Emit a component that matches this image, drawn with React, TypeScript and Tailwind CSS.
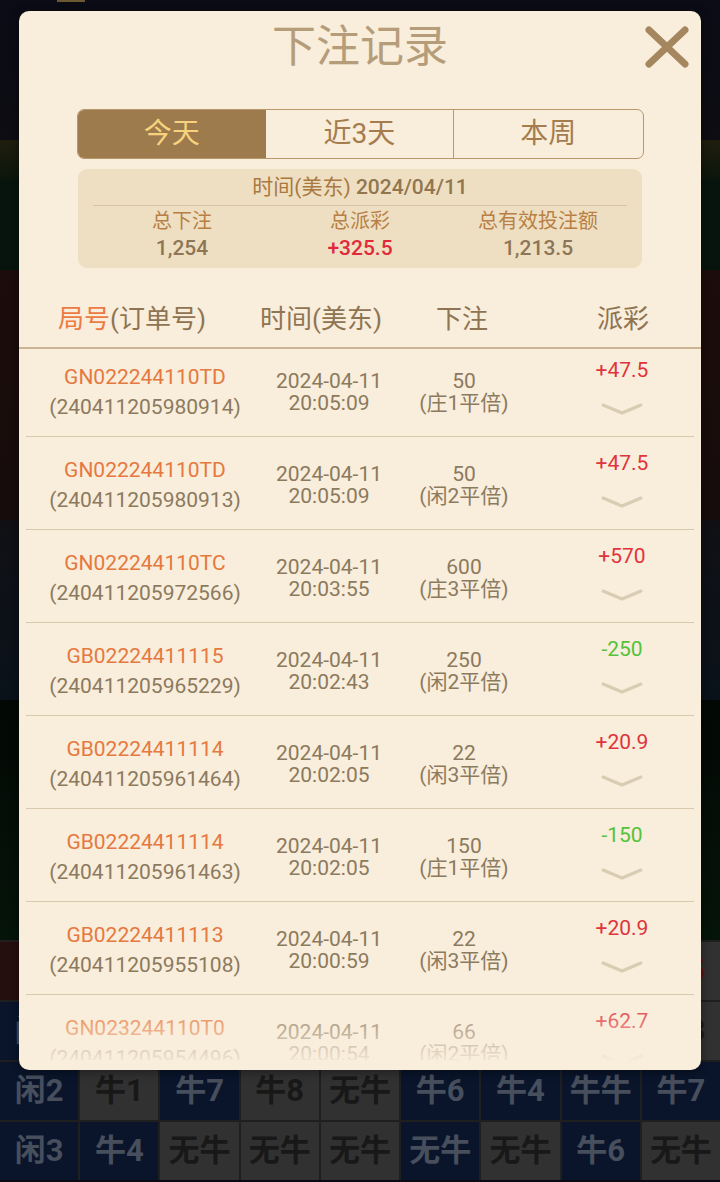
import React from 'react'

type Bet = {
  round: string
  order: string
  time: string
  amount: string
  kind: string
  payout: string
}

const bets: Bet[] = [
  { round: 'GN022244110TD', order: '240411205980914', time: '20:05:09', amount: '50', kind: '庄1平倍', payout: '+47.5' },
  { round: 'GN022244110TD', order: '240411205980913', time: '20:05:09', amount: '50', kind: '闲2平倍', payout: '+47.5' },
  { round: 'GN022244110TC', order: '240411205972566', time: '20:03:55', amount: '600', kind: '庄3平倍', payout: '+570' },
  { round: 'GB02224411115', order: '240411205965229', time: '20:02:43', amount: '250', kind: '闲2平倍', payout: '-250' },
  { round: 'GB02224411114', order: '240411205961464', time: '20:02:05', amount: '22', kind: '闲3平倍', payout: '+20.9' },
  { round: 'GB02224411114', order: '240411205961463', time: '20:02:05', amount: '150', kind: '庄1平倍', payout: '-150' },
  { round: 'GB02224411113', order: '240411205955108', time: '20:00:59', amount: '22', kind: '闲3平倍', payout: '+20.9' },
  { round: 'GN023244110T0', order: '240411205954496', time: '20:00:54', amount: '66', kind: '闲2平倍', payout: '+62.7' },
]

// dimmed road board behind the modal (n = navy, g = gray, r = red)
const board: [string, string, string][][] = [
  [['庄', 'r', 'text-[#4a2222]'], ['牛2', 'g', 'text-[#181818]'], ['牛3', 'n', 'text-[#474e5c]'], ['牛9', 'g', 'text-[#181818]'], ['牛1', 'n', 'text-[#474e5c]'], ['牛5', 'g', 'text-[#181818]'], ['牛2', 'n', 'text-[#474e5c]'], ['牛8', 'g', 'text-[#181818]'], ['牛5', 'g', 'text-[#5a1616]']],
  [['闲1', 'n', 'text-[#474e5c]'], ['牛6', 'g', 'text-[#181818]'], ['牛2', 'n', 'text-[#474e5c]'], ['无牛', 'g', 'text-[#181818]'], ['牛4', 'n', 'text-[#474e5c]'], ['牛7', 'g', 'text-[#181818]'], ['牛1', 'n', 'text-[#474e5c]'], ['牛9', 'g', 'text-[#181818]'], ['牛3', 'g', 'text-[#181818]']],
  [['闲2', 'n', 'text-[#474e5c]'], ['牛1', 'g', 'text-[#181818]'], ['牛7', 'n', 'text-[#474e5c]'], ['牛8', 'g', 'text-[#181818]'], ['无牛', 'g', 'text-[#181818]'], ['牛6', 'n', 'text-[#474e5c]'], ['牛4', 'n', 'text-[#474e5c]'], ['牛牛', 'n', 'text-[#474e5c]'], ['牛7', 'n', 'text-[#474e5c]']],
  [['闲3', 'n', 'text-[#474e5c]'], ['牛4', 'n', 'text-[#474e5c]'], ['无牛', 'g', 'text-[#181818]'], ['无牛', 'g', 'text-[#181818]'], ['无牛', 'g', 'text-[#181818]'], ['无牛', 'n', 'text-[#474e5c]'], ['无牛', 'g', 'text-[#181818]'], ['牛6', 'n', 'text-[#474e5c]'], ['无牛', 'g', 'text-[#181818]']],
]

const cellBg: Record<string, string> = {
  n: 'bg-[#0a152b]',
  g: 'bg-[#313131]',
  r: 'bg-[#260e0e]',
}

function Chevron() {
  return (
    <svg width="42" height="12" viewBox="0 0 42 12">
      <path d="M2 2 L21 10 L40 2" fill="none" stroke="#d8ccb3" strokeWidth="3" strokeLinecap="round" strokeLinejoin="round" />
    </svg>
  )
}

function CloseIcon() {
  return (
    <svg width="48" height="46" viewBox="0 0 48 46">
      <path d="M6 6 L42 40 M42 6 L6 40" stroke="#a5875f" strokeWidth="7" strokeLinecap="round" />
    </svg>
  )
}

function BetRow({ bet }: { bet: Bet }) {
  const positive = bet.payout.startsWith('+')
  return (
    <div className="grid h-[93px] grid-cols-[238px_130px_140px_160px] border-b border-[#d9c9ab]">
      <div className="flex flex-col items-center justify-center pt-1 text-[21px] leading-[30px]">
        <span className="text-[#e5793f]">{bet.round}</span>
        <span className="text-[#8b7a5e]">({bet.order})</span>
      </div>
      <div className="flex flex-col items-center justify-center pt-1 text-[21px] leading-[22px] text-[#8b7a5e]">
        <span>2024-04-11</span>
        <span>{bet.time}</span>
      </div>
      <div className="flex flex-col items-center justify-center pt-1 text-[21px] leading-[22px] text-[#8b7a5e]">
        <span>{bet.amount}</span>
        <span>({bet.kind})</span>
      </div>
      <div className="flex flex-col items-center pl-4 pt-[14px]">
        <span className={`text-[21px] leading-[24px] ${positive ? 'text-[#e0343c]' : 'text-[#55c23a]'}`}>{bet.payout}</span>
        <div className="mt-[21px]">
          <Chevron />
        </div>
      </div>
    </div>
  )
}

export default function App() {
  return (
    <div className="relative h-[1182px] w-[720px] overflow-hidden bg-[#0a0a12] font-[Roboto,'Noto_Sans_CJK_SC',sans-serif]">
      {/* game scene behind the dimmed overlay */}
      <div className="flex flex-col">
        <div className="relative h-[140px] bg-gradient-to-b from-[#0b0b16] to-[#0d0d12]">
          <div className="absolute left-[57px] top-0 h-[2px] w-[28px] bg-[#6b5a30]" />
        </div>
        <div className="h-[40px] bg-gradient-to-b from-[#1f1e0e] to-[#0b150b]" />
        <div className="h-[90px] bg-[#06140d]" />
        <div className="h-[250px] bg-gradient-to-b from-[#1c0c0b] to-[#160c0c]" />
        <div className="h-[180px] bg-gradient-to-b from-[#101014] to-[#09121a]" />
        <div className="h-[240px] bg-gradient-to-b from-[#030805] to-[#051409]" />
        <div className="grid grid-cols-9 gap-[2px] bg-[#1f1f1f] pt-[2px]">
          {board.flat().map(([label, tone, color], i) => (
            <div
              key={i}
              className={`flex h-[58px] items-center justify-center text-[31px] font-bold ${cellBg[tone]} ${color}`}
            >
              {label}
            </div>
          ))}
        </div>
      </div>

      {/* modal */}
      <div className="absolute left-[19px] top-[11px] flex h-[1059px] w-[682px] flex-col overflow-hidden rounded-[10px] bg-[#f9eddb] pb-[10px] shadow-[0_2px_10px_rgba(0,0,0,0.4)]">
        <div className="absolute right-[10px] top-[13px]">
          <CloseIcon />
        </div>

        <h1 className="pt-[14px] text-center text-[44px] leading-[44px] text-[#b59d7a]">下注记录</h1>

        <div className="mx-auto mt-[40px] grid h-[50px] w-[567px] grid-cols-3 overflow-hidden rounded-[7px] border-[1.5px] border-[#b8976c] text-[28px]">
          <div className="flex items-center justify-center bg-[#9d7b4c] text-[#f7d27e]">今天</div>
          <div className="flex items-center justify-center border-r-[1.5px] border-[#b8976c] text-[#a47c4d]">近3天</div>
          <div className="flex items-center justify-center text-[#a47c4d]">本周</div>
        </div>

        <div className="mx-auto mt-[10px] h-[99px] w-[564px] rounded-[9px] bg-[#efdfc2] pt-[5px]">
          <div className="text-center text-[21px] leading-[26px] text-[#a9793f]">
            时间(美东) <span className="font-medium text-[#917650]">2024/04/11</span>
          </div>
          <div className="mx-[15px] mt-[5px] border-t border-[#d8c2a0]" />
          <div className="mx-[15px] mt-[2px] grid grid-cols-3 text-center text-[20px] leading-[26px] text-[#b77f45]">
            <span>总下注</span>
            <span>总派彩</span>
            <span>总有效投注额</span>
          </div>
          <div className="mx-[15px] mt-[1px] grid grid-cols-3 text-center text-[21px] font-medium leading-[26px] text-[#8c7657]">
            <span>1,254</span>
            <span className="text-[#e02a3c]">+325.5</span>
            <span>1,213.5</span>
          </div>
        </div>

        <div className="mt-[34px] grid h-[47px] grid-cols-[226px_152px_130px_174px] border-b-2 border-[#cbb594] text-[26px] leading-[34px] text-[#8e7452]">
          <div className="text-center">
            <span className="text-[#ec7a44]">局号</span>(订单号)
          </div>
          <div className="text-center">时间(美东)</div>
          <div className="text-center">下注</div>
          <div className="pl-[18px] text-center">派彩</div>
        </div>

        <div className="relative flex-1 overflow-hidden">
          <div className="mx-[7px] -mt-[5px]">
            {bets.map((bet, i) => (
              <BetRow key={i} bet={bet} />
            ))}
          </div>
          <div className="pointer-events-none absolute bottom-0 left-0 right-0 h-[60px] bg-gradient-to-b from-[#f9eddb]/0 to-[#f9eddb]/90" />
        </div>
      </div>
    </div>
  )
}
